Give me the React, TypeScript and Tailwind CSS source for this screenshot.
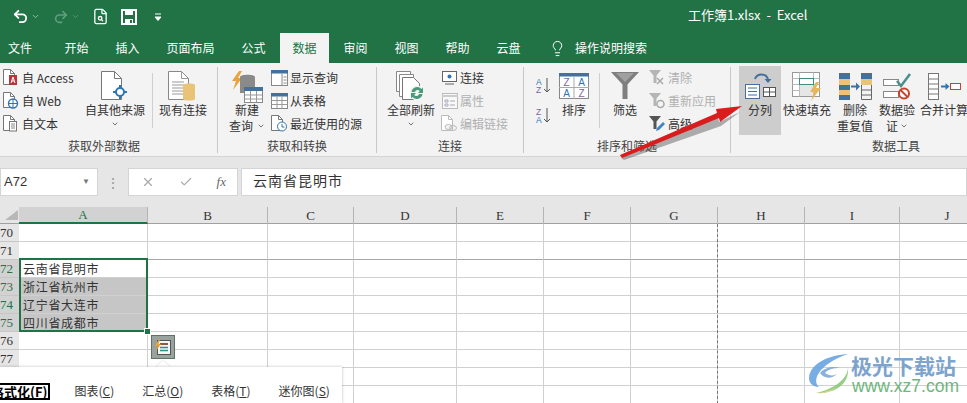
import type { ReactNode } from "react";
import { ChevronDown, Undo2, Redo2, FileSearch, Lightbulb, X, Check } from "lucide-react";

const tabs = [
    { label: "文件", w: "w-[50px] pl-[8px]" },
    { label: "开始", w: "w-[49px] justify-center" },
    { label: "插入", w: "w-[49px] justify-center" },
    { label: "页面布局", w: "w-[73px] justify-center" },
    { label: "公式", w: "w-[49px] justify-center" },
    { label: "数据", w: "w-[49px] justify-center" },
    { label: "审阅", w: "w-[49px] justify-center" },
    { label: "视图", w: "w-[49px] justify-center" },
    { label: "帮助", w: "w-[49px] justify-center" },
    { label: "云盘", w: "w-[49px] justify-center" },
];

const columns = [
    { label: "A", w: "w-[129px]" },
    { label: "B", w: "w-[120px]" },
    { label: "C", w: "w-[86px]" },
    { label: "D", w: "w-[103px]" },
    { label: "E", w: "w-[87px]" },
    { label: "F", w: "w-[87px]" },
    { label: "G", w: "w-[87px]" },
    { label: "H", w: "w-[87px]" },
    { label: "I", w: "w-[95px]" },
    { label: "J", w: "w-[95px]" },
];

// the last two rows sit under the quick analysis panel, their numbers never show
const rows = [
    { n: "70", text: "" },
    { n: "71", text: "" },
    { n: "72", text: "云南省昆明市" },
    { n: "73", text: "浙江省杭州市" },
    { n: "74", text: "辽宁省大连市" },
    { n: "75", text: "四川省成都市" },
    { n: "76", text: "" },
    { n: "77", text: "" },
    { n: "", text: "" },
    { n: "", text: "" },
];

const cjk = { fontFamily: '"Noto Sans CJK SC", sans-serif' };

const doc = "M.5.5h7l4 4v11h-11z";

function SmallDoc({ color = "#777", children }: { color?: string; children?: ReactNode }) {
    return (
        <svg width="17" height="17" viewBox="0 0 17 17" fill="none">
            <path d={doc} fill="#fff" stroke={color} />
            <path d="M7.5.5v4h4" stroke={color} />
            {children}
        </svg>
    );
}

function AccessIcon() {
    return (
        <SmallDoc>
            <rect x="6" y="6" width="8" height="10" fill="#b7363a" />
            <path d="M8 14l2-6 2 6M9 12h2" stroke="#fff" />
        </SmallDoc>
    );
}

function WebIcon() {
    return (
        <SmallDoc>
            <circle cx="10" cy="11.5" r="4.5" fill="#fff" stroke="#2e75b6" strokeWidth="1.4" />
            <path d="M5.5 11.5h9M10 7v9" stroke="#2e75b6" />
        </SmallDoc>
    );
}

function TextDocIcon() {
    return (
        <SmallDoc>
            <rect x="6.5" y="6.5" width="7" height="9.5" fill="#fff" stroke="#777" />
            <path d="M8 9h4M8 11h4M8 13h4" stroke="#888" />
        </SmallDoc>
    );
}

function HeaderTable({ side }: { side?: boolean }) {
    return (
        <svg width="17" height="16" viewBox="0 0 17 16" fill="none">
            <rect x=".5" y=".5" width="16" height="15" fill="#fff" stroke="#888" />
            <rect width="17" height="3.5" fill="#41719c" />
            {side ? (
                <path d="M11 3.5v12M12.5 7h3M12.5 10h3M12.5 13h3" stroke="#888" />
            ) : (
                <path d="M.5 7.5h16M.5 11.5h16M6 3.5v12M11 3.5v12" stroke="#999" />
            )}
        </svg>
    );
}

function RecentIcon() {
    return (
        <SmallDoc>
            <circle cx="11" cy="11.5" r="4.5" fill="#fff" stroke="#2e75b6" />
            <path d="M11 9v3h2.5" stroke="#2e75b6" />
        </SmallDoc>
    );
}

function OtherSourceIcon() {
    return (
        <svg width="28" height="30" viewBox="0 0 28 30" fill="none">
            <path d="M.5.5h13l7 7v21H.5z" fill="#fff" stroke="#777" />
            <path d="M13.5.5v7h7" stroke="#777" />
            <path d="M19 14v14M12 21h14" stroke="#2e75b6" strokeWidth="2" />
            <circle cx="19" cy="21" r="4" fill="#fff" stroke="#2e75b6" strokeWidth="2" />
        </svg>
    );
}

function ExistingIcon() {
    return (
        <svg width="30" height="30" viewBox="0 0 30 30" fill="none">
            <path d="M.5.5h13l7 7v21H.5z" fill="#fff" stroke="#888" />
            <path d="M13.5.5v7h7M4 11h12M4 14h12M4 17h12M4 20h12M4 23h12" stroke="#999" />
            <path d="M15 14c0-2 12-2 12 0v14c0 2-12 2-12 0z" fill="#e8c378" />
        </svg>
    );
}

function NewQueryIcon() {
    return (
        <svg width="32" height="33" viewBox="0 0 32 33" fill="none">
            <path d="M8 1L1 11h4L2 20l9-12H7l4-7z" fill="#e8a33d" />
            <path d="M9 7c0-3 15-3 15 0v16H9z" fill="#8a8a8a" />
            <rect x="13.5" y="17.5" width="18" height="15" fill="#fff" stroke="#888" />
            <rect x="13" y="17" width="19" height="4" fill="#41719c" />
            <path d="M14 25h17M14 29h17M19.5 21v11M25.5 21v11" stroke="#999" />
        </svg>
    );
}

function RefreshAllIcon() {
    return (
        <svg width="30" height="30" viewBox="0 0 30 30" fill="none">
            <path d="M.5.5h14v20H.5z" fill="#fff" stroke="#888" />
            <path d="M3.5 3.5h14v22h-14z" fill="#fff" stroke="#888" />
            <path d="M6.5 6.5h11l6 6v16h-17z" fill="#fff" stroke="#777" />
            <circle cx="21" cy="22" r="7.5" fill="#f3f3f3" />
            <path d="M15.5 21a5.8 5.8 0 0 1 10-3l1.5-1.5V22h-5l1.8-2a3 3 0 0 0-5 1zM26.5 23a5.8 5.8 0 0 1-10 3L15 27.5V22h5l-1.8 2a3 3 0 0 0 5-1z" fill="#4a9a7a" />
        </svg>
    );
}

function ConnectionIcon() {
    return (
        <svg width="17" height="14" viewBox="0 0 17 14" fill="none">
            <rect x="1.5" y=".5" width="14" height="10" fill="#fff" stroke="#666" />
            <circle cx="8.5" cy="5.5" r="2" fill="#2e75b6" />
            <path d="M4 13h9" stroke="#666" />
        </svg>
    );
}

function PropertiesIcon() {
    return (
        <svg width="16" height="16" viewBox="0 0 16 16" fill="none">
            <rect x=".5" y=".5" width="15" height="15" fill="#f8f8f8" stroke="#bbb" />
            <path d="M0 3h16" stroke="#ccc" strokeWidth="2" />
            <path d="M3 7h3v2H3zM3 11h3v2H3zM8 8h5M8 12h5" stroke="#aab" />
        </svg>
    );
}

function EditLinkIcon() {
    return (
        <SmallDoc color="#bbb">
            <ellipse cx="7.5" cy="12" rx="3.5" ry="2.5" fill="#f3f3f3" stroke="#bbb" />
            <ellipse cx="12" cy="13" rx="3.5" ry="2.5" stroke="#bbb" />
        </SmallDoc>
    );
}

function SortAZIcon({ reverse }: { reverse?: boolean }) {
    const top = reverse ? "Z" : "A";
    const bottom = reverse ? "A" : "Z";
    return (
        <svg width="15" height="17" viewBox="0 0 15 17" fill="none">
            <text x="0" y="7.5" fontSize="8.5" fontFamily="Liberation Sans" fill={reverse ? "#8064a2" : "#2e75b6"}>{top}</text>
            <text x="0" y="16" fontSize="8.5" fontFamily="Liberation Sans" fill={reverse ? "#2e75b6" : "#8064a2"}>{bottom}</text>
            <path d="M11 1v14M8 12l3 3 3-3" stroke="#555" />
        </svg>
    );
}

function SortIcon() {
    return (
        <svg width="30" height="26" viewBox="0 0 30 26" fill="none">
            <rect x=".5" y=".5" width="29" height="25" fill="#fff" stroke="#888" />
            <rect width="30" height="3.5" fill="#41719c" />
            <path d="M15 3v23M0 14.5h30" stroke="#aaa" />
            <text x="7.5" y="13" textAnchor="middle" fontSize="10" fontFamily="Liberation Sans" fill="#8064a2">Z</text>
            <text x="22.5" y="13" textAnchor="middle" fontSize="10" fontFamily="Liberation Sans" fill="#2e75b6">A</text>
            <text x="7.5" y="24" textAnchor="middle" fontSize="10" fontFamily="Liberation Sans" fill="#2e75b6">A</text>
            <text x="22.5" y="24" textAnchor="middle" fontSize="10" fontFamily="Liberation Sans" fill="#8064a2">Z</text>
        </svg>
    );
}

function FunnelBig() {
    return (
        <svg width="28" height="28" viewBox="0 0 28 28">
            <path d="M0 0h28L16.5 12.5V27h-5V12.5z" fill="#7f7f7f" />
            <path d="M5 1h18l-9 9z" fill="#a0a0a0" />
        </svg>
    );
}

function FunnelSmall({ kind }: { kind: "clear" | "reapply" | "advanced" }) {
    const fill = kind === "advanced" ? "#555" : "#b5b5b5";
    return (
        <svg width="17" height="17" viewBox="0 0 17 17" fill="none">
            <path d="M0 1h12L7.5 6.5V14h-3V6.5z" fill={fill} />
            {kind === "clear" && <path d="M8 9l6 6M14 9l-6 6" stroke="#aaa" strokeWidth="1.5" />}
            {kind === "reapply" && <circle cx="11.5" cy="12" r="3.5" stroke="#aaa" strokeWidth="1.5" />}
            {kind === "advanced" && <path d="M7 16l1-3 6-6 2 2-6 6z" fill="#3d85c6" />}
        </svg>
    );
}

function TextToColumnsIcon() {
    return (
        <svg width="31" height="26" viewBox="0 0 31 26" fill="none">
            <rect x=".5" y="11.5" width="14" height="14" fill="#fff" stroke="#41719c" />
            <path d="M3 15h9M3 18.5h9M3 22h9" stroke="#41719c" />
            <rect x="18.5" y="14.5" width="12" height="9" fill="#fff" stroke="#555" />
            <path d="M18.5 19h12M24.5 14.5v9" stroke="#555" />
            <path d="M10 6a7 7 0 0 1 13 0" stroke="#41719c" strokeWidth="2" />
            <path d="M19.5 6h7l-3.5 4z" fill="#41719c" />
        </svg>
    );
}

function FlashFillIcon() {
    return (
        <svg width="31" height="29" viewBox="0 0 31 29" fill="none">
            <rect x=".5" y=".5" width="27" height="24" fill="#fff" stroke="#999" />
            <path d="M.5 6.5h27M.5 12.5h27M.5 18.5h27M7.5.5v24M21.5.5v24" stroke="#bbb" />
            <rect x="7.5" y="6.5" width="14" height="6" fill="#fff" stroke="#3c8d8a" />
            <rect x="8" y="13" width="13" height="11" fill="#e6e6e6" />
            <path d="M24 10l-6 10h4l-3 9 10-13h-5l3-6z" fill="#e8b65c" />
        </svg>
    );
}

function RemoveDuplicatesIcon() {
    return (
        <svg width="33" height="27" viewBox="0 0 33 27" fill="none">
            <rect width="11" height="27" fill="#41719c" />
            <rect y="6" width="11" height="6" fill="#e8c378" />
            <rect y="17" width="11" height="5" fill="#e8c378" />
            <path d="M12 13.5h7" stroke="#41719c" strokeWidth="2" />
            <path d="M17 9.5l4 4-4 4z" fill="#41719c" />
            <rect x="22" y="0" width="11" height="6" fill="#41719c" />
            <rect x="22" y="6" width="11" height="6" fill="#e8c378" />
            <path d="M22.5 12v14.5h10V12M22.5 17h10M22.5 22h10" stroke="#666" />
        </svg>
    );
}

function ValidationIcon() {
    return (
        <svg width="29" height="27" viewBox="0 0 29 27" fill="none">
            <rect x=".5" y="6.5" width="15" height="6" fill="#fff" stroke="#888" />
            <rect x=".5" y="18.5" width="15" height="6" fill="#fff" stroke="#888" />
            <path d="M14 8l4 5 9-12" stroke="#4a8f8a" strokeWidth="2.5" />
            <circle cx="21" cy="20.5" r="5" fill="#fff" stroke="#c8432b" strokeWidth="2" />
            <path d="M17.5 17l7 7" stroke="#c8432b" strokeWidth="2" />
        </svg>
    );
}

function ConsolidateIcon() {
    return (
        <svg width="33" height="27" viewBox="0 0 33 27" fill="none">
            <rect x=".5" y=".5" width="10" height="26" fill="#fff" stroke="#777" />
            <path d="M.5 6h10M.5 11h10M.5 16h10M.5 21h10" stroke="#777" />
            <path d="M13 13.5h6" stroke="#2e75b6" strokeWidth="2" />
            <path d="M17.5 10l4 3.5-4 3.5z" fill="#2e75b6" />
            <rect x="22.5" y="10.5" width="10" height="6" fill="#fff" stroke="#c8432b" />
        </svg>
    );
}

function GroupLabel({ text, className = "" }: { text: string; className?: string }) {
    return <div className={`h-[16px] text-center text-[12px] leading-[16px] text-[#444] ${className}`}>{text}</div>;
}

function SmallRow({ icon, text, muted }: { icon: ReactNode; text: ReactNode; muted?: boolean }) {
    return (
        <div className={`flex h-[23px] items-center gap-[2px] text-[12px] whitespace-nowrap ${muted ? "text-[#b0b0b0]" : "text-[#333]"}`}>
            <span className="flex w-[17px] shrink-0 justify-center">{icon}</span>
            {text}
        </div>
    );
}

function BigButton({ icon, lines, width, chevron, active }: { icon: ReactNode; lines: ReactNode[]; width: string; chevron?: boolean; active?: boolean }) {
    return (
        <div className={`mt-[3px] flex h-[69px] shrink-0 flex-col items-center pt-[4px] text-[12px] leading-[16px] whitespace-nowrap text-[#333] ${width} ${active ? "bg-[#cdcdcd]" : ""}`}>
            <div className="flex h-[32px] items-center justify-center">{icon}</div>
            {lines.map((l, i) => (
                <div key={i}>{l}</div>
            ))}
            {chevron && <ChevronDown size={8} className="mt-[2px]" />}
        </div>
    );
}

function Divider() {
    return <div className="mt-[4px] h-[86px] w-px shrink-0 bg-[#c8c8c8]" />;
}

function InnerDivider({ className }: { className: string }) {
    return <div className={`mt-[10px] h-[55px] w-px shrink-0 bg-[#cfcfcf] ${className}`} />;
}

export default function App() {
    return (
        <div className="relative h-[403px] w-[967px] overflow-hidden bg-white" style={cjk}>
            {/* Title bar */}
            <div className="relative flex h-[33px] items-center bg-[#217346] pl-[12px] text-white">
                <Undo2 size={17} strokeWidth={2.6} />
                <ChevronDown size={9} className="ml-[2px] opacity-70" />
                <Redo2 size={16} strokeWidth={2.4} className="ml-[13px] opacity-30" />
                <ChevronDown size={9} className="ml-[2px] opacity-30" />
                <FileSearch size={17} strokeWidth={1.8} className="ml-[12px]" />
                <svg width="16" height="16" viewBox="0 0 16 16" fill="none" className="ml-[12px]">
                    <path d="M1 1h14v14H1z" stroke="#fff" strokeWidth="2" />
                    <path d="M4 1h8v5H4zM4 10h8v5H4z" fill="#fff" />
                    <path d="M9 11h2v3H9z" fill="#217346" />
                </svg>
                <svg width="8" height="8" viewBox="0 0 8 8" className="ml-[17px]">
                    <path d="M1 1h6M1 4h6L4 7.5z" stroke="#fff" fill="#fff" />
                </svg>
                <div className="absolute left-[688px] top-[6px] text-[13px] leading-[17px] whitespace-nowrap">
                    工作簿1.xlsx&nbsp;&nbsp;-&nbsp;&nbsp;Excel
                </div>
            </div>

            {/* Tabs */}
            <div className="flex h-[30px] items-stretch gap-[2px] bg-[#217346] text-[12px] text-white">
                {tabs.map((t) => (
                    <div key={t.label} className={`flex items-center ${t.w} ${t.label === "数据" ? "bg-[#f3f3f3] text-[#217346]" : ""}`}>
                        {t.label}
                    </div>
                ))}
                <div className="ml-[14px] flex items-center gap-[9px]">
                    <Lightbulb size={17} strokeWidth={1.4} />
                    操作说明搜索
                </div>
            </div>

            {/* Ribbon */}
            <div className="flex h-[94px] border-b border-[#d4d4d4] bg-[#f3f3f3] text-[#333]">
                <div className="flex w-[217px] shrink-0 flex-col">
                    <div className="flex h-[75px] pl-[3px]">
                        <div className="w-[77px] pt-[3px]">
                            <SmallRow icon={<AccessIcon />} text="自 Access" />
                            <SmallRow icon={<WebIcon />} text="自 Web" />
                            <SmallRow icon={<TextDocIcon />} text="自文本" />
                        </div>
                        <BigButton icon={<OtherSourceIcon />} lines={["自其他来源"]} width="w-[70px]" chevron />
                        <InnerDivider className="ml-[2px]" />
                        <div className="ml-[4px]">
                            <BigButton icon={<ExistingIcon />} lines={["现有连接"]} width="w-[52px]" />
                        </div>
                    </div>
                    <GroupLabel text="获取外部数据" className="w-[208px]" />
                </div>
                <Divider />

                <div className="flex w-[158px] shrink-0 flex-col">
                    <div className="flex h-[75px] pl-[10px]">
                        <BigButton
                            icon={<NewQueryIcon />}
                            lines={[
                                "新建",
                                <span className="flex items-center gap-[4px]">
                                    查询
                                    <ChevronDown size={8} />
                                </span>,
                            ]}
                            width="w-[38px]"
                        />
                        <div className="ml-[5px] pt-[3px]">
                            <SmallRow icon={<HeaderTable side />} text="显示查询" />
                            <SmallRow icon={<HeaderTable />} text="从表格" />
                            <SmallRow icon={<RecentIcon />} text="最近使用的源" />
                        </div>
                    </div>
                    <GroupLabel text="获取和转换" />
                </div>
                <Divider />

                <div className="flex w-[146px] shrink-0 flex-col">
                    <div className="flex h-[75px] pl-[8px]">
                        <BigButton icon={<RefreshAllIcon />} lines={["全部刷新"]} width="w-[52px]" chevron />
                        <div className="ml-[4px] pt-[3px]">
                            <SmallRow icon={<ConnectionIcon />} text="连接" />
                            <SmallRow icon={<PropertiesIcon />} text="属性" muted />
                            <SmallRow icon={<EditLinkIcon />} text="编辑链接" muted />
                        </div>
                    </div>
                    <GroupLabel text="连接" />
                </div>
                <Divider />

                <div className="flex w-[206px] shrink-0 flex-col">
                    <div className="flex h-[75px] pl-[12px]">
                        <div className="flex w-[15px] shrink-0 flex-col gap-[13px] pt-[14px]">
                            <SortAZIcon />
                            <SortAZIcon reverse />
                        </div>
                        <div className="ml-[7px]">
                            <BigButton icon={<SortIcon />} lines={["排序"]} width="w-[32px]" />
                        </div>
                        <InnerDivider className="ml-[9px]" />
                        <div className="ml-[10px]">
                            <BigButton icon={<FunnelBig />} lines={["筛选"]} width="w-[30px]" />
                        </div>
                        <div className="ml-[9px] pt-[3px]">
                            <SmallRow icon={<FunnelSmall kind="clear" />} text="清除" muted />
                            <SmallRow icon={<FunnelSmall kind="reapply" />} text="重新应用" muted />
                            <SmallRow icon={<FunnelSmall kind="advanced" />} text="高级" />
                        </div>
                    </div>
                    <GroupLabel text="排序和筛选" />
                </div>
                <Divider />

                <div className="flex w-[330px] shrink-0 flex-col">
                    <div className="flex h-[75px] pl-[8px]">
                        <BigButton icon={<TextToColumnsIcon />} lines={["分列"]} width="w-[42px]" active />
                        <div className="ml-[2px]">
                            <BigButton icon={<FlashFillIcon />} lines={["快速填充"]} width="w-[48px]" />
                        </div>
                        <div className="ml-[6px]">
                            <BigButton icon={<RemoveDuplicatesIcon />} lines={["删除", "重复值"]} width="w-[36px]" />
                        </div>
                        <div className="ml-[6px]">
                            <BigButton
                                icon={<ValidationIcon />}
                                lines={[
                                    "数据验",
                                    <span className="flex items-center gap-[2px]">
                                        证
                                        <ChevronDown size={8} />
                                    </span>,
                                ]}
                                width="w-[36px]"
                            />
                        </div>
                        <div className="ml-[5px]">
                            <BigButton icon={<ConsolidateIcon />} lines={["合并计算"]} width="w-[48px]" />
                        </div>
                    </div>
                    <GroupLabel text="数据工具" />
                </div>
            </div>

            {/* Formula bar */}
            <div className="flex h-[50px] items-start bg-[#e6e6e6] pt-[11px]">
                <div className="flex h-[28px] w-[98px] shrink-0 items-center justify-between border border-[#d4d4d4] bg-white pl-[3px] pr-[7px] font-['Liberation_Sans',sans-serif] text-[13px] text-[#333]">
                    A72
                    <span className="text-[8px] text-[#777]">▼</span>
                </div>
                <div className="w-[30px] shrink-0 text-center text-[14px] leading-[28px] text-[#999]">⋮</div>
                <div className="flex h-[28px] w-[110px] shrink-0 items-center justify-between border border-[#d4d4d4] bg-white pl-[12px] pr-[11px] text-[#aaa]">
                    <X size={14} />
                    <Check size={14} />
                    <span className="font-['Liberation_Serif',serif] text-[13px] italic text-[#666]">fx</span>
                </div>
                <div className="ml-[3px] flex h-[28px] flex-1 items-center border border-[#d4d4d4] bg-white pb-[3px] pl-[11px] text-[14px] tracking-[1px] text-[#333]">
                    云南省昆明市
                </div>
            </div>

            {/* Grid */}
            <div className="flex h-[17px] border-b border-[#a0a0a0] bg-[#e6e6e6] font-['Liberation_Serif',serif] text-[13px] leading-[16px] text-[#333]">
                <div className="flex w-[19px] shrink-0 items-end justify-end pb-[3px] pr-[1px]">
                    <svg width="13" height="10" viewBox="0 0 13 10">
                        <path d="M0 10L13 0v10z" fill="#b8b8b8" />
                    </svg>
                </div>
                {columns.map((c) => (
                    <div
                        key={c.label}
                        className={`flex h-[17px] shrink-0 items-center justify-center border-r border-[#b4b4b4] ${c.w} ${c.label === "A" ? "border-b-2 border-b-[#217346] bg-[#d2d2d2] text-[#217346]" : ""}`}
                    >
                        {c.label}
                    </div>
                ))}
            </div>
            {rows.map((r, i) => {
                const selected = ["72", "73", "74", "75"].includes(r.n);
                const shaded = ["73", "74", "75"].includes(r.n);
                return (
                    <div key={i} className="flex h-[18px]">
                        <div
                            className={`flex w-[19px] shrink-0 items-center justify-end border-b border-[#c6c6c6] pr-[6px] font-['Liberation_Serif',serif] text-[13px] ${selected ? "bg-[#d2d2d2] text-[#217346]" : "bg-[#e6e6e6] text-[#333]"}`}
                        >
                            {r.n}
                        </div>
                        {columns.map((c) => (
                            <div
                                key={c.label}
                                className={`shrink-0 border-b border-r pl-[4px] text-[12px] leading-[17px] tracking-[0.7px] text-[#333] ${r.n === "71" ? "border-b-[#a8a8a8] border-r-[#d0d0d0]" : "border-[#d0d0d0]"} ${c.w} ${c.label === "A" && shaded ? "bg-[#c6c6c6]" : ""}`}
                            >
                                {c.label === "A" ? r.text : ""}
                            </div>
                        ))}
                    </div>
                );
            })}

            {/* Page break */}
            <div className="absolute left-[717px] top-[224px] h-[180px] border-l border-dashed border-[#777]" />

            {/* Selection box */}
            <div className="absolute left-[19px] top-[258px] h-[74px] w-[129px] border-2 border-[#217346]" />
            <div className="absolute left-[144px] top-[328px] h-[7px] w-[7px] border border-white bg-[#217346]" />

            {/* Quick analysis */}
            <div className="absolute left-[151px] top-[335px] flex h-[24px] w-[24px] items-center justify-center border border-[#5e7268] bg-[#98a39d]">
                <svg width="18" height="18" viewBox="0 0 18 18" fill="none">
                    <rect x="3.5" y="2.5" width="13" height="14" fill="#f5f5f5" stroke="#555" />
                    <path d="M6 6h8" stroke="#8a5a44" strokeWidth="2" />
                    <path d="M6 9.5h8M6 12.5h8" stroke="#2f8f8f" strokeWidth="1.5" />
                    <path d="M5 1L1 8h2.5L2 13l5-7H4.5L6 1z" fill="#e8a33d" />
                </svg>
            </div>
            <div className="absolute left-[158px] top-[362px] h-[10px] w-[10px] rotate-45 bg-white shadow-[0_0_2px_rgba(0,0,0,0.2)]" />
            <div className="absolute left-0 top-[367px] flex h-[36px] w-[342px] items-start bg-white pt-[16px] text-[12px] leading-[16px] text-[#333] shadow-[0_0_3px_rgba(0,0,0,0.25)]">
                <span className="ml-[-12px] shrink-0 border-2 border-black pl-[1px] pr-[1px] text-[13px] font-bold leading-[13px] text-black whitespace-nowrap">
                    格式化(<u>F</u>)
                </span>
                <span className="ml-[24px] whitespace-nowrap">图表(<u>C</u>)</span>
                <span className="ml-[28px] whitespace-nowrap">汇总(<u>O</u>)</span>
                <span className="ml-[28px] whitespace-nowrap">表格(<u>T</u>)</span>
                <span className="ml-[28px] whitespace-nowrap">迷你图(<u>S</u>)</span>
            </div>

            {/* Annotation arrow */}
            <svg className="absolute left-[615px] top-[100px]" width="130" height="62" viewBox="0 0 130 62">
                <path d="M6 58 L103 17 L104 22 L125 12 L106 26 L9 60z" fill="#555" opacity="0.45" />
                <path d="M5 55 L102 13 L101 9 L127 6 L105 22 L104 18 L7 58z" fill="#d91c1c" />
            </svg>

            {/* Watermark */}
            <div className="absolute left-[808px] top-[353px] opacity-90">
                <svg className="absolute left-0 top-0" width="42" height="41" viewBox="0 0 42 41">
                    <path d="M40 1C22 2 2 10 1 25c0 6 5 9 10 9C4 28 9 12 40 1z" fill="#6aa5e0" />
                    <path d="M12 20c5-6 14-7 20-5-6 0-12 1-15 5 4 3 9 3 12 1-5 5-13 5-17-1z" fill="#7fa8d8" />
                    <path d="M40 14c0 12-14 22-32 26 16 1 34-7 32-26z" fill="#8cc97a" />
                    <path d="M8 40c6 0 14-2 20-6-5 5-12 7-20 6z" fill="#e3d768" />
                </svg>
                <div className="ml-[43px] text-[21px] leading-[24px] font-bold whitespace-nowrap text-[#6f9bc9]">极光下载站</div>
                <div className="ml-[44px] mt-[1px] font-['Liberation_Sans',sans-serif] text-[17.5px] leading-[16px] whitespace-nowrap text-[#5fb06f]">www.xz7.com</div>
            </div>
        </div>
    );
}
